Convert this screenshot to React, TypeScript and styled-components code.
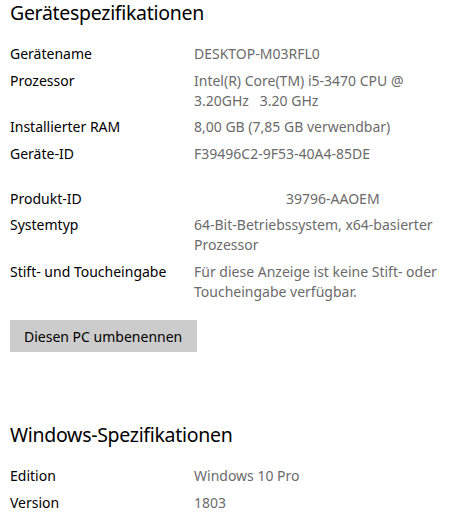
import React from "react";
import styled, { createGlobalStyle } from "styled-components";

const GlobalStyle = createGlobalStyle`
    body {
        margin: 0;
        background: #ffffff;
        font-family: "Noto Sans", "Open Sans", sans-serif;
    }
`;

const Page = styled.div`
    padding: 0 10px;
    width: 454px;
    box-sizing: border-box;
`;

const Heading = styled.h2`
    margin: 0;
    font-size: 19.5px;
    font-weight: 400;
    letter-spacing: -0.3px;
    line-height: 26px;
    color: #000000;
`;

const SpecList = styled.div<{ top: number }>`
    display: flex;
    flex-direction: column;
    gap: 6.6px;
    margin-top: ${(p) => p.top}px;
`;

const Row = styled.div<{ space?: number }>`
    display: grid;
    grid-template-columns: 184px 1fr;
    font-size: 14px;
    line-height: 20px;
    margin-top: ${(p) => p.space || 0}px;
`;

const Label = styled.div`
    color: #000000;
`;

const Value = styled.div<{ indent?: number }>`
    color: #6b6b6b;
    padding-left: ${(p) => p.indent || 0}px;
`;

const Button = styled.button`
    margin-top: 18px;
    width: 187px;
    height: 32px;
    border: none;
    background: #cccccc;
    font-family: inherit;
    font-size: 14px;
    color: #000000;
    padding: 0 14px;
    text-align: left;
`;

const SectionGap = styled.div`
    height: 70px;
`;

const device = [
    { label: "Gerätename", value: "DESKTOP-M03RFL0" },
    { label: "Prozessor", value: "Intel(R) Core(TM) i5-3470 CPU @ 3.20GHz\u00a0\u00a0 3.20 GHz" },
    { label: "Installierter RAM", value: "8,00 GB (7,85 GB verwendbar)" },
    { label: "Geräte-ID", value: "F39496C2-9F53-40A4-85DE" },
    { label: "Produkt-ID", value: "39796-AAOEM", space: 18.5, indent: 92 },
    { label: "Systemtyp", value: "64-Bit-Betriebssystem, x64-basierter Prozessor" },
    { label: "Stift- und Toucheingabe", value: "Für diese Anzeige ist keine Stift- oder Toucheingabe verfügbar." },
];

const windows = [
    { label: "Edition", value: "Windows 10 Pro" },
    { label: "Version", value: "1803" },
];

export default function App() {
    return (
        <Page>
            <GlobalStyle />
            <Heading>Gerätespezifikationen</Heading>
            <SpecList top={18}>
                {device.map((d) => (
                    <Row key={d.label} space={d.space}>
                        <Label>{d.label}</Label>
                        <Value indent={d.indent}>{d.value}</Value>
                    </Row>
                ))}
            </SpecList>
            <Button>Diesen PC umbenennen</Button>
            <SectionGap />
            <Heading>Windows-Spezifikationen</Heading>
            <SpecList top={18}>
                {windows.map((d) => (
                    <Row key={d.label}>
                        <Label>{d.label}</Label>
                        <Value>{d.value}</Value>
                    </Row>
                ))}
            </SpecList>
        </Page>
    );
}
